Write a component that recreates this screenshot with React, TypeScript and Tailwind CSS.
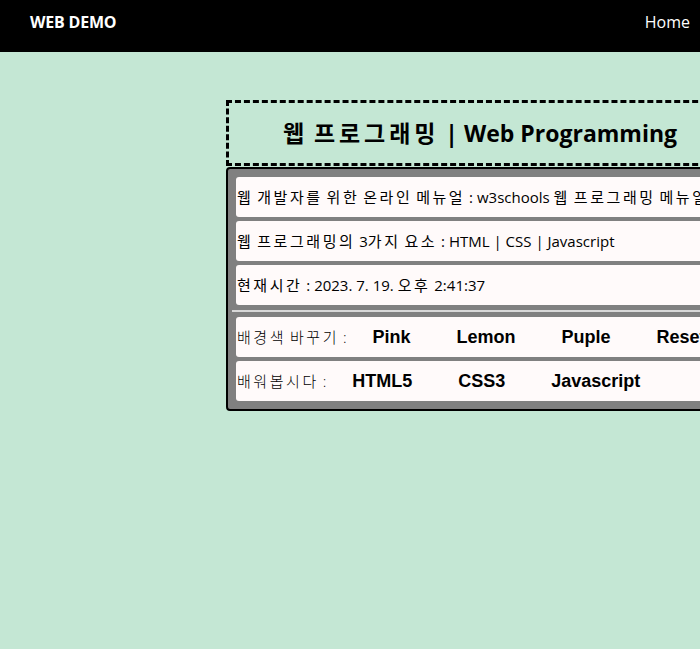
import React from 'react';

const korean = { fontFamily: '"Open Sans", "Noto Sans CJK KR", sans-serif' };
const arial = { fontFamily: '"Liberation Sans", Arial, sans-serif' };

// Hangul in the reference is set wider than Noto CJK, so spread those runs
function K({ text }: { text: string }) {
  const parts = text.split(/([\uac00-\ud7a3]+)/);
  return (
    <span>
      {parts.map((p, i) =>
        /[\uac00-\ud7a3]/.test(p) ? (
          <span key={i} className="tracking-[0.17em]">
            {p}
          </span>
        ) : (
          <span key={i}>{p}</span>
        )
      )}
    </span>
  );
}

function Row({ children }: { children: React.ReactNode }) {
  return (
    <div className="h-[40px] bg-[#fffafa] rounded-[3px] flex items-center pl-px whitespace-pre overflow-hidden text-[15px] text-black">
      {children}
    </div>
  );
}

function Btn({ label }: { label: string }) {
  return (
    <button className="px-[23px] text-[18px] font-bold text-black bg-transparent" style={arial}>
      {label}
    </button>
  );
}

export default function App() {
  return (
    <div className="w-[700px] h-[649px] overflow-hidden bg-[#c4e7d4] flex flex-col" style={korean}>
      {/* Nav */}
      <nav className="h-[52px] bg-black text-white flex items-center justify-between pl-[30px] pr-[10px] pb-[8px] shrink-0">
        <span className="font-bold text-[16px] tracking-[-0.2px]">WEB DEMO</span>
        <span className="text-[16px]">Home</span>
      </nav>

      {/* Main */}
      <main className="pl-[226px] pt-[48px] flex flex-col">
        <div className="w-[508px] shrink-0">
          <div className="h-[66px] border-[3px] border-dashed border-black flex items-center justify-center">
            <h1 className="text-[23px] font-bold text-black whitespace-nowrap">
              <K text="웹 프로그래밍 | Web Programming" />
            </h1>
          </div>

          <div className="mt-px bg-[#808080] border-2 border-black rounded-[4px] p-[8px] flex flex-col gap-[4px]">
            <Row>
              <K text="웹 개발자를 위한 온라인 메뉴얼 : w3schools 웹 프로그래밍 메뉴얼" />
            </Row>
            <Row>
              <K text="웹 프로그래밍의 3가지 요소 : HTML | CSS | Javascript" />
            </Row>
            <Row>
              <K text="현재시간 : 2023. 7. 19. 오후 2:41:37" />
            </Row>
            <div className="-mx-[4px] h-[2px] bg-[#d8d8d8] my-[1px]" />
            <Row>
              <span className="font-light text-black mr-[3px]">
                <K text="배경색 바꾸기 :" />
              </span>
              <Btn label="Pink" />
              <Btn label="Lemon" />
              <Btn label="Puple" />
              <Btn label="Reset" />
            </Row>
            <Row>
              <span className="font-light text-black mr-[3px]">
                <K text="배워봅시다 :" />
              </span>
              <Btn label="HTML5" />
              <Btn label="CSS3" />
              <Btn label="Javascript" />
            </Row>
          </div>
        </div>
      </main>
    </div>
  );
}
